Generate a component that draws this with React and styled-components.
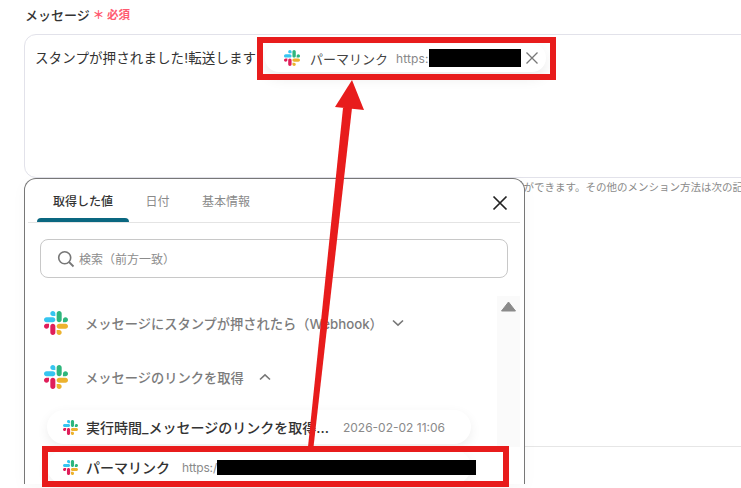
import React from "react";
import styled, { createGlobalStyle } from "styled-components";

const Global = createGlobalStyle`
  html, body { margin: 0; padding: 0; background: #fff; }
  body {
    width: 741px; height: 488px; overflow: hidden;
    font-family: Inter, "Noto Sans CJK JP", sans-serif; color: #333;
  }
`;

const Page = styled.div`
  position: relative;
  width: 741px;
  height: 488px;
  overflow: hidden;
  padding: 4px 0 0 24px;
  box-sizing: border-box;
`;
const LabelRow = styled.div`
  display: flex;
  align-items: center;
  height: 20px;
  margin-left: 1px;
  margin-bottom: 10px;
  font-size: 13px;
  font-weight: 500;
  color: #333;
`;
const Required = styled.span`
  margin-left: 3px;
  font-size: 11.5px;
  font-weight: 700;
  color: #ff5a70;
`;
const MessageBox = styled.div`
  display: flex;
  align-items: flex-start;
  width: 800px;
  height: 144px;
  box-sizing: border-box;
  padding: 9px 10px;
  border: 1px solid #e2e2ea;
  border-radius: 12px;
`;
const MessageText = styled.span`
  font-size: 13.5px;
  letter-spacing: 0.1px;
  line-height: 28px;
  color: #333;
  white-space: nowrap;
  width: 230px;
  flex: none;
`;
const TokenChip = styled.div`
  display: flex;
  align-items: center;
  width: 281px;
  height: 28px;
  flex: none;
  box-sizing: border-box;
  padding-left: 19px;
  border-radius: 14px;
  background: #fff;
  box-shadow: 0 6px 14px rgba(0, 0, 0, 0.08);
`;
const TokenName = styled.span`
  margin-left: 10px;
  font-size: 13px;
  color: #444;
  white-space: nowrap;
`;
const TokenUrl = styled.span`
  margin-left: 8px;
  font-size: 12px;
  letter-spacing: 0.15px;
  color: #888;
  white-space: nowrap;
`;
const Redaction = styled.div`
  flex: none;
  background: #000;
  width: ${(p) => p.$w}px;
  height: ${(p) => p.$h}px;
`;
const TokenClose = styled.svg`
  flex: none;
  margin-left: 4px;
`;
const HelpText = styled.div`
  margin: 1px 0 0 384px;
  font-size: 10.5px;
  line-height: 18px;
  color: #8a8a8a;
  white-space: nowrap;
`;
const Divider = styled.div`
  margin-top: 249px;
  height: 1px;
  width: 760px;
  background: #e6e6e6;
`;

const Panel = styled.div`
  position: absolute;
  left: 24px;
  top: 178px;
  width: 501px;
  height: 306px;
  box-sizing: border-box;
  background: #fff;
  border: 1px solid #777;
  border-bottom: none;
  border-radius: 12px 12px 0 0;
  padding: 0 4px 0 3px;
  box-shadow: 0 4px 16px rgba(0, 0, 0, 0.03);
`;
const TabBar = styled.div`
  display: flex;
  align-items: stretch;
  height: 43px;
  border-bottom: 1px solid #e4e4e4;
`;
const Tab = styled.div`
  position: relative;
  display: flex;
  align-items: center;
  justify-content: center;
  flex: none;
  white-space: nowrap;
  box-sizing: border-box;
  margin-left: ${(p) => p.$ml}px;
  width: ${(p) => p.$w}px;
  font-size: 12px;
  font-weight: ${(p) => (p.$active ? 500 : 400)};
  color: ${(p) => (p.$active ? "#333" : "#8a8a8a")};
  ${(p) =>
    p.$active &&
    `&::after {
      content: "";
      position: absolute;
      left: 0; right: 0; bottom: 0;
      height: 4px;
      border-radius: 4px 4px 0 0;
      background: #0a6780;
    }`}
`;
const PanelClose = styled.svg`
  margin-left: auto;
  margin-right: 12px;
  margin-top: 4px;
  align-self: center;
`;
const SearchBox = styled.div`
  display: flex;
  align-items: center;
  gap: 4px;
  height: 39px;
  box-sizing: border-box;
  margin: 16px 12px 0 12px;
  padding-left: 16px;
  border: 1px solid #c8c8c8;
  border-radius: 8px;
  font-size: 12px;
  color: #8c8c8c;
`;
const ListArea = styled.div`
  position: relative;
  display: flex;
  flex-direction: column;
  margin-top: 18px;
  padding-left: 16px;
`;
const Scrollbar = styled.div`
  position: absolute;
  right: 0;
  top: 0;
  width: 23px;
  height: 151px;
  display: flex;
  justify-content: center;
  padding-top: 5px;
  box-sizing: border-box;
  background: #fafafa;
`;
const Group = styled.div`
  display: flex;
  align-items: center;
  height: 54px;
  font-size: 13.25px;
  font-weight: 500;
  color: #7c7c7c;
  white-space: nowrap;
`;
const GroupName = styled.span`
  margin-left: 17px;
  margin-right: ${(p) => p.$gap}px;
`;
const ValueRow = styled.div`
  display: flex;
  align-items: center;
  box-sizing: border-box;
  width: 424px;
  margin-left: 3px;
  height: ${(p) => p.$h}px;
  margin-top: ${(p) => p.$mt}px;
  padding-left: 16px;
  border-radius: 17px;
  background: #fff;
  box-shadow: 0 4px 12px rgba(0, 0, 0, 0.07);
`;
const ValueName = styled.span`
  margin-left: 8px;
  font-size: 14px;
  font-weight: 500;
  color: #333;
  white-space: nowrap;
`;
const ValueDate = styled.span`
  margin-left: 14px;
  font-size: 12px;
  color: #8a8a8a;
  white-space: nowrap;
`;
const ValueUrl = styled.span`
  margin-left: 12px;
  font-size: 12px;
  letter-spacing: -0.15px;
  color: #8a8a8a;
  white-space: nowrap;
`;

const ChipHighlight = styled.div`
  position: absolute;
  left: 257px;
  top: 37px;
  width: 299px;
  height: 43px;
  box-sizing: border-box;
  border: 6px solid #e81c1c;
`;
const RowHighlight = styled.div`
  position: absolute;
  left: 42px;
  top: 446px;
  width: 467px;
  height: 41px;
  box-sizing: border-box;
  border: 6px solid #e81c1c;
`;
const ArrowLayer = styled.svg`
  position: absolute;
  left: 0;
  top: 0;
`;

const Slack = ({ size }) => (
  <svg width={size} height={size} viewBox="0 0 122.8 122.8" style={{ flex: "none" }}>
    <path fill="#e01e5a" d="M25.8 77.6c0 7.1-5.8 12.9-12.9 12.9S0 84.7 0 77.6s5.8-12.9 12.9-12.9h12.9v12.9zm6.5 0c0-7.1 5.8-12.9 12.9-12.9s12.9 5.8 12.9 12.9v32.3c0 7.1-5.8 12.9-12.9 12.9s-12.9-5.8-12.9-12.9V77.6z" />
    <path fill="#36c5f0" d="M45.2 25.8c-7.1 0-12.9-5.8-12.9-12.9S38.1 0 45.2 0s12.9 5.8 12.9 12.9v12.9H45.2zm0 6.5c7.1 0 12.9 5.8 12.9 12.9s-5.8 12.9-12.9 12.9H12.9C5.8 58.1 0 52.3 0 45.2s5.8-12.9 12.9-12.9h32.3z" />
    <path fill="#2eb67d" d="M97 45.2c0-7.1 5.8-12.9 12.9-12.9s12.9 5.8 12.9 12.9-5.8 12.9-12.9 12.9H97V45.2zm-6.5 0c0 7.1-5.8 12.9-12.9 12.9s-12.9-5.8-12.9-12.9V12.9C64.7 5.8 70.5 0 77.6 0s12.9 5.8 12.9 12.9v32.3z" />
    <path fill="#ecb22e" d="M77.6 97c7.1 0 12.9 5.8 12.9 12.9s-5.8 12.9-12.9 12.9-12.9-5.8-12.9-12.9V97h12.9zm0-6.5c-7.1 0-12.9-5.8-12.9-12.9s5.8-12.9 12.9-12.9h32.3c7.1 0 12.9 5.8 12.9 12.9s-5.8 12.9-12.9 12.9H77.6z" />
  </svg>
);

const Chevron = ({ up }) => (
  <svg width="12" height="8" viewBox="0 0 12 8" style={{ flex: "none" }}>
    <path d={up ? "M1 6.500 6 1.800l5 4.700" : "M1 1.500 6 6.200l5-4.700"} fill="none" stroke="#777" strokeWidth="1.6" />
  </svg>
);

export default function App() {
  return (
    <>
      <Global />
      <Page>
        <LabelRow>
          メッセージ<Required>＊ 必須</Required>
        </LabelRow>
        <MessageBox>
          <MessageText>スタンプが押されました!転送します</MessageText>
          <TokenChip>
            <Slack size={16} />
            <TokenName>パーマリンク</TokenName>
            <TokenUrl>https:</TokenUrl>
            <Redaction $w={92} $h={18} />
            <TokenClose width="14" height="14" viewBox="0 0 14 14">
              <path d="M1.500 1.500l11 11M12.500 1.500l-11 11" stroke="#777" strokeWidth="1.3" fill="none" />
            </TokenClose>
          </TokenChip>
        </MessageBox>
        <HelpText>メンションを付けることができます。その他のメンション方法は次の記号</HelpText>
        <Divider />

        <Panel>
          <TabBar>
            <Tab $active $ml={9} $w={92}>取得した値</Tab>
            <Tab $ml={17} $w={23}>日付</Tab>
            <Tab $ml={32} $w={50}>基本情報</Tab>
            <PanelClose width="16" height="16" viewBox="0 0 16 16">
              <path d="M1.500 1.500l13 13M14.500 1.500l-13 13" stroke="#222" strokeWidth="1.7" fill="none" />
            </PanelClose>
          </TabBar>
          <SearchBox>
            <svg width="18" height="18" viewBox="0 0 18 18">
              <circle cx="7.700" cy="7.700" r="6" fill="none" stroke="#777" strokeWidth="1.6" />
              <path d="M12 12l4.500 4.500" stroke="#777" strokeWidth="1.8" />
            </svg>
            検索（前方一致）
          </SearchBox>
          <ListArea>
            <Scrollbar>
              <svg width="15" height="11" viewBox="0 0 15 11">
                <path d="M7.500 1 14.500 10H.5z" fill="#8a8a8a" stroke="#8a8a8a" strokeLinejoin="round" />
              </svg>
            </Scrollbar>
            <Group>
              <Slack size={24} />
              <GroupName $gap={9}>メッセージにスタンプが押されたら（Webhook）</GroupName>
              <Chevron />
            </Group>
            <Group>
              <Slack size={24} />
              <GroupName $gap={15}>メッセージのリンクを取得</GroupName>
              <Chevron up />
            </Group>
            <ValueRow $h={34} $mt={6}>
              <Slack size={15} />
              <ValueName>実行時間_メッセージのリンクを取得…</ValueName>
              <ValueDate>2026-02-02 11:06</ValueDate>
            </ValueRow>
            <ValueRow $h={34} $mt={6}>
              <Slack size={15} />
              <ValueName>パーマリンク</ValueName>
              <ValueUrl>https:/</ValueUrl>
              <Redaction $w={259} $h={15} />
            </ValueRow>
          </ListArea>
        </Panel>

        <ChipHighlight />
        <RowHighlight />
        <ArrowLayer width="741" height="488" viewBox="0 0 741 488">
          <path d="M308 447H313.500L352 108H343Z" fill="#e81c1c" />
          <path d="M352 80 364 110 335 107Z" fill="#e81c1c" />
        </ArrowLayer>
      </Page>
    </>
  );
}
